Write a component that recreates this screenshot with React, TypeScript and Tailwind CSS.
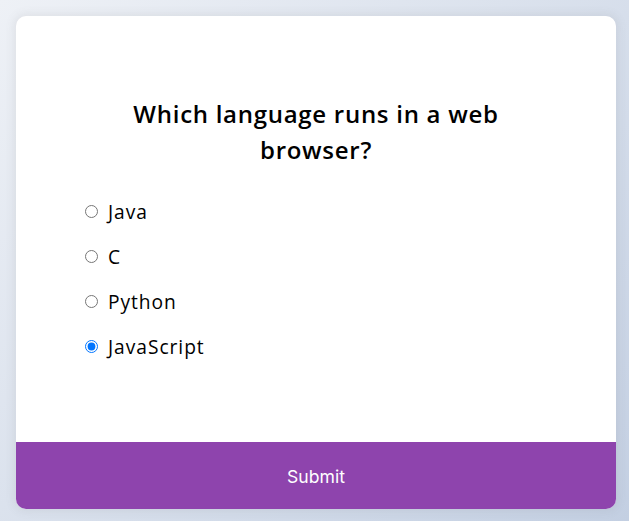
import React, { useState } from 'react';

const quizData = {
  question: 'Which language runs in a web browser?',
  options: ['Java', 'C', 'Python', 'JavaScript'],
};

const App: React.FC = () => {
  const [selected, setSelected] = useState<string>('JavaScript');

  return (
    <div className="min-h-screen w-full bg-[linear-gradient(135deg,#eef1f6_0%,#c3cfe2_100%)] pt-4 pl-4 font-['Open_Sans',sans-serif]">
      <div className="w-[600px] bg-white rounded-[10px] overflow-hidden shadow-[0_0_10px_2px_rgba(100,100,100,0.1)]">
        <div className="px-16 pt-16 pb-[81px]">
          <h2 className="px-4 pt-4 pb-[13px] text-center text-[24px] leading-[36px] tracking-[0.03em] text-black font-semibold">
            {quizData.question}
          </h2>
          <ul>
            {quizData.options.map((opt) => (
              <li key={opt} className="mt-4 flex items-center text-[19.2px] leading-[29px] tracking-[0.05em] text-black">
                <input
                  type="radio"
                  name="answer"
                  id={opt}
                  checked={selected === opt}
                  onChange={() => setSelected(opt)}
                  className="w-[13px] h-[13px] mx-[5px] my-0 cursor-pointer"
                />
                <label htmlFor={opt} className="cursor-pointer ml-[5px]">
                  {opt}
                </label>
              </li>
            ))}
          </ul>
        </div>
        <button className="block w-full h-[67px] pt-[3px] bg-[#8e44ad] text-white text-[17.6px] font-['Inter',sans-serif] cursor-pointer">
          Submit
        </button>
      </div>
    </div>
  );
};

export default App;
